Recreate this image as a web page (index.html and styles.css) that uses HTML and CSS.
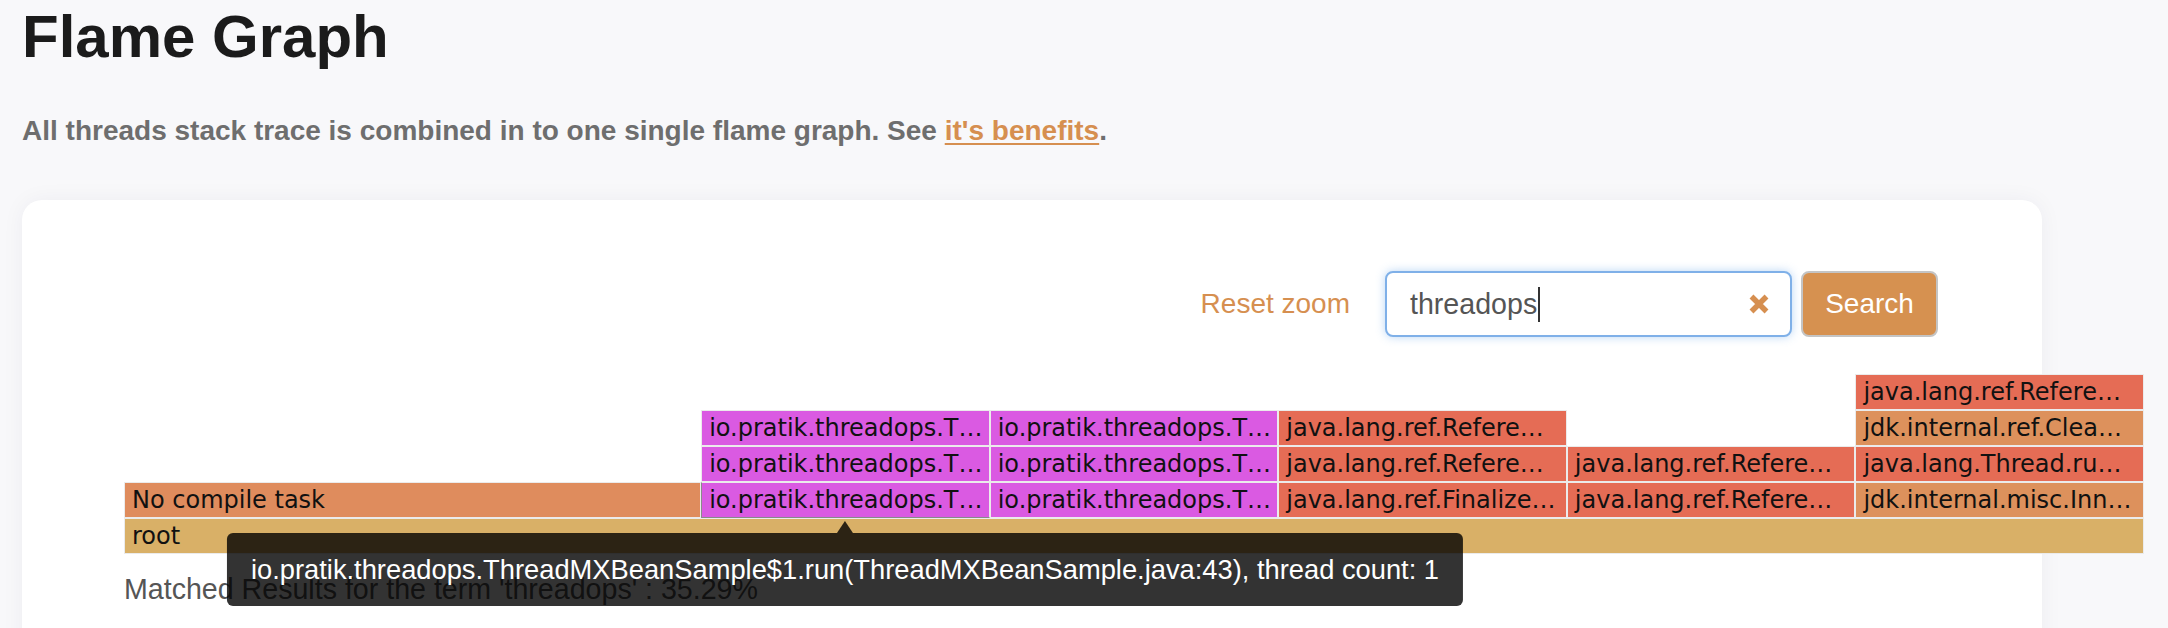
FILE: index.html
```html
<!DOCTYPE html>
<html lang="en">
<head>
<meta charset="utf-8">
<title>Flame Graph</title>
<link rel="stylesheet" href="styles.css">
</head>
<body>
<main class="page">
  <h1 class="title">Flame Graph</h1>
  <p class="lead">All threads stack trace is combined in to one single flame graph. See <a href="#" class="lead-link">it's benefits</a>.</p>
  <section class="card">
    <div class="controls">
      <a class="reset" href="#">Reset zoom</a>
      <div class="search-box" role="searchbox">
        <span class="search-text">threadops</span><span class="caret"></span>
        <svg class="clear" width="22" height="20" viewBox="0 0 22 20" aria-hidden="true">
          <path d="M3.5 2.5 L18.5 17.5 M18.5 2.5 L3.5 17.5" stroke="#d68f50" stroke-width="5.5" fill="none"/>
        </svg>
      </div>
      <button class="search-btn" type="button">Search</button>
    </div>
    <div class="flame">
      <div class="frame red x7 y1">java.lang.ref.Refere…</div>

      <div class="frame magenta x3 y2">io.pratik.threadops.T…</div>
      <div class="frame magenta x4 y2">io.pratik.threadops.T…</div>
      <div class="frame red x5 y2">java.lang.ref.Refere…</div>
      <div class="frame amber x7 y2">jdk.internal.ref.Clea…</div>

      <div class="frame magenta x3 y3">io.pratik.threadops.T…</div>
      <div class="frame magenta x4 y3">io.pratik.threadops.T…</div>
      <div class="frame red x5 y3">java.lang.ref.Refere…</div>
      <div class="frame red x6 y3">java.lang.ref.Refere…</div>
      <div class="frame red x7 y3">java.lang.Thread.ru…</div>

      <div class="frame task x1 w2 y4">No compile task</div>
      <div class="frame magenta hovered x3 y4">io.pratik.threadops.T…</div>
      <div class="frame magenta x4 y4">io.pratik.threadops.T…</div>
      <div class="frame red x5 y4">java.lang.ref.Finalize…</div>
      <div class="frame red x6 y4">java.lang.ref.Refere…</div>
      <div class="frame amber x7 y4">jdk.internal.misc.Inn…</div>

      <div class="frame root x1 w7 y5">root</div>

      <div class="tooltip">io.pratik.threadops.ThreadMXBeanSample$1.run(ThreadMXBeanSample.java:43), thread count: 1</div>
    </div>
    <p class="matched">Matched Results for the term 'threadops' : 35.29%</p>
  </section>
</main>
</body>
</html>
```

FILE: styles.css
```css
* { box-sizing: border-box; }

html, body {
  margin: 0;
  background: #f8f8fa;
}

body {
  font-family: "Liberation Sans", Arial, sans-serif;
  overflow: hidden;
}

.page {
  padding: 0 126px 0 22px;
}

.title {
  margin: 0;
  padding-top: 3px;
  font-size: 60px;
  line-height: 68px;
  font-weight: 700;
  color: #1b1b1b;
}

.lead {
  margin: 44px 0 0;
  font-size: 28px;
  line-height: 32px;
  font-weight: 700;
  color: #6e6e6e;
}

.lead-link {
  color: #d68f50;
  text-decoration: underline;
  text-underline-offset: 3px;
  text-decoration-thickness: 2px;
}

.card {
  margin-top: 53px;
  background: #ffffff;
  border-radius: 20px;
  padding: 71px 104px 90px 102px;
  box-shadow: 0 0 22px rgba(40, 40, 80, 0.05);
}

.controls {
  display: flex;
  justify-content: flex-end;
  align-items: center;
  height: 66px;
}

.reset {
  font-size: 28px;
  color: #d68f50;
  text-decoration: none;
  margin-right: 35px;
}

.search-box {
  width: 407px;
  height: 66px;
  display: flex;
  align-items: center;
  padding-left: 23px;
  border: 2px solid #7fb0e8;
  border-radius: 8px;
  background: #fff;
  box-shadow: 0 0 10px rgba(102, 165, 233, 0.45);
}

.search-text {
  font-size: 28.6px;
  color: #555555;
}

.caret {
  display: inline-block;
  width: 2px;
  height: 35px;
  margin-left: 1px;
  background: #333;
}

.clear {
  margin-left: auto;
  margin-right: 20px;
}

.search-btn {
  margin-left: 9px;
  width: 137px;
  height: 66px;
  border: 2px solid #c4c4c4;
  border-radius: 8px;
  background: #d69150;
  color: #ffffff;
  font-family: "Liberation Sans", Arial, sans-serif;
  font-size: 28px;
  padding: 0;
}

.flame {
  position: relative;
  margin-top: 37px;
  width: 2020px;
  display: grid;
  grid-template-columns: repeat(7, 1fr);
  grid-template-rows: repeat(5, 36px);
}

.frame {
  border: 1px solid #ebebeb;
  padding-left: 7px;
  font-family: "DejaVu Sans", Verdana, sans-serif;
  font-size: 24px;
  line-height: 34px;
  color: #111;
  white-space: nowrap;
  overflow: hidden;
}

.x1 { grid-column-start: 1; }
.x3 { grid-column-start: 3; }
.x4 { grid-column-start: 4; }
.x5 { grid-column-start: 5; }
.x6 { grid-column-start: 6; }
.x7 { grid-column-start: 7; }
.w2 { grid-column-end: span 2; }
.w7 { grid-column-end: span 7; }
.y1 { grid-row: 1; }
.y2 { grid-row: 2; }
.y3 { grid-row: 3; }
.y4 { grid-row: 4; }
.y5 { grid-row: 5; }

.red { background: #e56c55; }
.amber { background: #dd915c; }
.magenta { background: #da5ae2; }
.task { background: #df8c5d; }
.root { background: #d9b067; }

.hovered {
  border-left-color: #8a8a8a;
  border-bottom-color: #8a8a8a;
}

.tooltip {
  position: absolute;
  top: 159px;
  left: 721px;
  transform: translateX(-50%);
  height: 73px;
  line-height: 73px;
  padding: 0 24px;
  white-space: nowrap;
  background: rgba(0, 0, 0, 0.8);
  color: #ffffff;
  border-radius: 6px;
  font-family: "Liberation Sans", Arial, sans-serif;
  font-size: 27.3px;
  z-index: 2;
}

.tooltip::before {
  content: "";
  position: absolute;
  top: -12px;
  left: 50%;
  margin-left: -8px;
  border-left: 8px solid transparent;
  border-right: 8px solid transparent;
  border-bottom: 12px solid rgba(0, 0, 0, 0.8);
}

.matched {
  margin: 19px 0 0;
  font-size: 28.6px;
  line-height: 32px;
  color: #555555;
}
```
